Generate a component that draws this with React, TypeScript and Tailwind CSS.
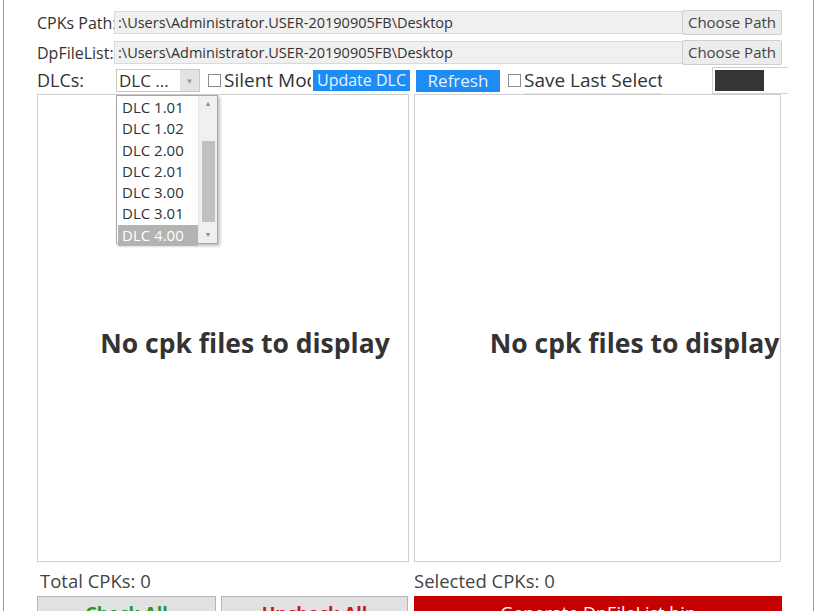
import React from 'react';

const PATH = ':\\Users\\Administrator.USER-20190905FB\\Desktop';
const DLCS = ['DLC 1.01', 'DLC 1.02', 'DLC 2.00', 'DLC 2.01', 'DLC 3.00', 'DLC 3.01', 'DLC 4.00'];

const Check = () => (
  <span className="inline-block w-[13px] h-[13px] border border-[#8c8c8c] bg-white shrink-0" />
);

const PathRow = ({ label }: { label: string }) => (
  <div className="flex items-center h-[25px] pl-[33px]">
    <span className="w-[77px] text-[16px] text-[#333] whitespace-nowrap overflow-visible">{label}</span>
    <div className="w-[578px] h-[23px] flex items-center bg-[#f0f0f0] border border-[#d9d9d9] text-[14.5px] text-[#333] pl-[3px] whitespace-nowrap overflow-hidden">
      {PATH}
    </div>
    <button className="-ml-[10px] w-[100px] h-[25px] bg-[#ececec] border border-[#cfcfcf] rounded-[2px] text-[15px] text-[#444] whitespace-nowrap">
      Choose Path
    </button>
  </div>
);

export default function App() {
  return (
    <div className="w-[817px] h-[611px] bg-white overflow-hidden" style={{ fontFamily: '"Open Sans", "Noto Sans", sans-serif' }}>
      <div className="relative ml-[3px] w-[811px] h-[611px] border-x border-[#9a9a9a] pt-[10px]">
        <PathRow label="CPKs Path:" />
        <div className="h-[5px]" />
        <PathRow label="DpFileList:" />

        {/* DLC row */}
        <div className="flex items-center h-[27px] mt-[2px] pl-[33px] text-[18px] text-[#333]">
          <span className="w-[79px]">DLCs:</span>
          <div className="flex w-[84px] h-[23px] border border-[#c8c8c8] bg-white text-[17px]">
            <span className="flex-1 pl-[2px] leading-[21px] whitespace-nowrap overflow-hidden">DLC ...</span>
            <span className="w-[19px] bg-[#e3e3e3] flex items-center justify-center text-[8px] text-[#999]">▼</span>
          </div>
          <span className="ml-[8px]"><Check /></span>
          <span className="ml-[3px] w-[87px] overflow-hidden whitespace-nowrap text-[19px]">Silent Mode</span>
          <button className="ml-[2px] w-[97px] h-[21px] bg-[#1e8cf5] text-[#e6f2ff] text-[16px] leading-[21px] overflow-hidden whitespace-nowrap">
            Update DLC
          </button>
          <button className="ml-[6px] w-[84px] h-[22px] bg-[#1e8cf5] text-[#e6f2ff] text-[17px] leading-[22px]">
            Refresh
          </button>
          <span className="ml-[8px]"><Check /></span>
          <span className="ml-[3px] w-[138px] h-[27px] leading-[27px] overflow-hidden whitespace-nowrap border-b border-[#e4e4e4] text-[19px]">
            Save Last Selected
          </span>
          <div className="ml-[50px] w-[76px] h-[27px] border-l border-t border-b border-[#d0d0d0] pl-[2px] pt-[2px]">
            <div className="w-[49px] h-[21px] bg-[#333536]" />
          </div>
        </div>

        {/* panels */}
        <div className="flex gap-[5px] pl-[33px] h-[468px]">
          <div className="w-[372px] h-full border border-[#cfcfcf] flex items-center justify-center pl-[44px] pt-[32px]">
            <span className="text-[26.5px] font-bold text-[#333] whitespace-nowrap">No cpk files to display</span>
          </div>
          <div className="w-[367px] h-full border border-[#cfcfcf] flex items-center justify-center pl-[74px] pt-[32px] overflow-visible">
            <span className="text-[26.5px] font-bold text-[#333] whitespace-nowrap">No cpk files to display</span>
          </div>
        </div>

        {/* counters */}
        <div className="flex pl-[36px] mt-[8px] h-[22px] text-[18.5px] leading-[22px] text-[#444]">
          <span className="w-[374px]">Total CPKs: 0</span>
          <span>Selected CPKs: 0</span>
        </div>

        {/* bottom buttons */}
        <div className="flex pl-[33px] mt-[4px] h-[34px]">
          <button className="w-[179px] h-full bg-[#e1e1e1] border border-[#b5b5b5] text-[18px] font-bold text-[#1f9a1f]">Check All</button>
          <button className="ml-[5px] w-[187px] h-full bg-[#e1e1e1] border border-[#b5b5b5] text-[18px] font-bold text-[#c81818]">Uncheck All</button>
          <button className="ml-[6px] w-[368px] h-full bg-[#c40000] text-[18px] text-white">Generate DpFileList.bin</button>
        </div>

        {/* open dropdown */}
        <div className="absolute left-[112px] top-[95px] w-[102px] h-[149px] bg-white border border-[#a8a8a8] shadow-[2px_2px_3px_rgba(0,0,0,0.25)] flex">
          <div className="flex-1 pt-[1px] pl-[1px]">
            {DLCS.map((d, i) => (
              <div
                key={d}
                className={`h-[21.3px] leading-[21px] pl-[4px] text-[15px] whitespace-nowrap ${i === DLCS.length - 1 ? 'bg-[#b3b3b3] text-white' : 'text-[#333]'}`}
              >
                {d}
              </div>
            ))}
          </div>
          <div className="w-[19px] bg-[#f0f0f0] border-l border-[#e6e6e6] flex flex-col items-center">
            <span className="h-[16px] text-[7px] text-[#888] leading-[16px]">▲</span>
            <div className="mt-[29px] w-[13px] h-[81px] bg-[#c1c1c1]" />
            <span className="mt-auto h-[16px] text-[7px] text-[#888] leading-[16px]">▼</span>
          </div>
        </div>
      </div>
    </div>
  );
}
